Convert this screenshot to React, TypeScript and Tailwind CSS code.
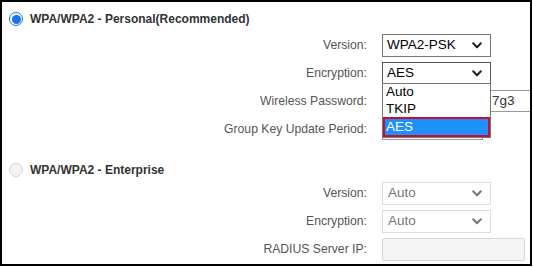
import React from "react";

const Chevron = ({ color = "#222" }: { color?: string }) => (
  <svg width="10" height="7" viewBox="0 0 10 7" className="shrink-0">
    <path d="M1.2 1.3 L5 5.2 L8.8 1.3" fill="none" stroke={color} strokeWidth="2" strokeLinecap="round" strokeLinejoin="round" />
  </svg>
);

const Row = ({ label, children }: { label: string; children: React.ReactNode }) => (
  <div className="flex h-[28px] items-center">
    <div className="w-[365px] shrink-0 text-right text-[12.2px] text-[#555]">{label}</div>
    <div className="ml-[15px] flex shrink-0 items-center">{children}</div>
  </div>
);

export default function App() {
  return (
    <div
      className="relative h-[266px] w-[532px] overflow-hidden border-2 border-black bg-white"
      style={{ fontFamily: '"Liberation Sans", Arial, sans-serif' }}
    >
      {/* Personal */}
      <div className="mt-[8px] flex h-[18px] items-center pl-[7px]">
        <span className="flex h-[14px] w-[14px] items-center justify-center rounded-full border border-[#1a73e8] bg-white">
          <span className="h-[9px] w-[9px] rounded-full bg-[#1a73e8]" />
        </span>
        <span className="ml-[7px] text-[12px] font-bold text-[#333]">WPA/WPA2 - Personal(Recommended)</span>
      </div>
      <div className="mt-[3px]">
        <Row label="Version:">
          <div className="flex h-[23px] w-[109px] items-center justify-between border border-[#767676] pl-[4px] pr-[8px] text-[13.5px] text-black">
            <span>WPA2-PSK</span>
            <Chevron />
          </div>
        </Row>
        <Row label="Encryption:">
          <div className="flex h-[22px] w-[109px] items-center justify-between border border-[#555] pl-[4px] pr-[8px] text-[13.5px] text-black">
            <span>AES</span>
            <Chevron />
          </div>
        </Row>
        <Row label="Wireless Password:">
          <div className="flex h-[22px] w-[180px] items-center border border-[#999] pl-[109px] text-[13.5px] text-[#333]">
            7g3
          </div>
        </Row>
        <Row label="Group Key Update Period:">
          <div className="h-[22px] w-[101px] border border-[#999]" />
        </Row>
      </div>

      {/* Enterprise */}
      <div className="mt-[18px] flex h-[18px] items-center pl-[7px]">
        <span className="h-[14px] w-[14px] rounded-full border border-[#d4d4d4] bg-[#f3f3f3]" />
        <span className="ml-[7px] text-[12px] font-bold text-[#333]">WPA/WPA2 - Enterprise</span>
      </div>
      <div>
        <Row label="Version:">
          <div className="flex h-[23px] w-[109px] items-center justify-between border border-[#ddd] pl-[5px] pr-[8px] text-[13.5px] text-[#777]">
            <span>Auto</span>
            <Chevron color="#777" />
          </div>
        </Row>
        <Row label="Encryption:">
          <div className="flex h-[23px] w-[109px] items-center justify-between border border-[#ddd] pl-[5px] pr-[8px] text-[13.5px] text-[#777]">
            <span>Auto</span>
            <Chevron color="#777" />
          </div>
        </Row>
        <Row label="RADIUS Server IP:">
          <div className="h-[23px] w-[143px] rounded-[2px] border border-[#d8d8d8] bg-[#f5f5f5]" />
        </Row>
      </div>

      {/* open dropdown list */}
      <div className="absolute left-[380px] top-[81px] w-[109px] border border-[#767676] bg-white text-[13.5px] text-black">
        <div className="flex h-[17px] items-center pl-[3px]">Auto</div>
        <div className="flex h-[16px] items-center pl-[3px]">TKIP</div>
        <div className="flex h-[20px] items-center border-2 border-[#c8102e] bg-[#1e90ff] pl-[1px] text-white">AES</div>
      </div>
    </div>
  );
}
